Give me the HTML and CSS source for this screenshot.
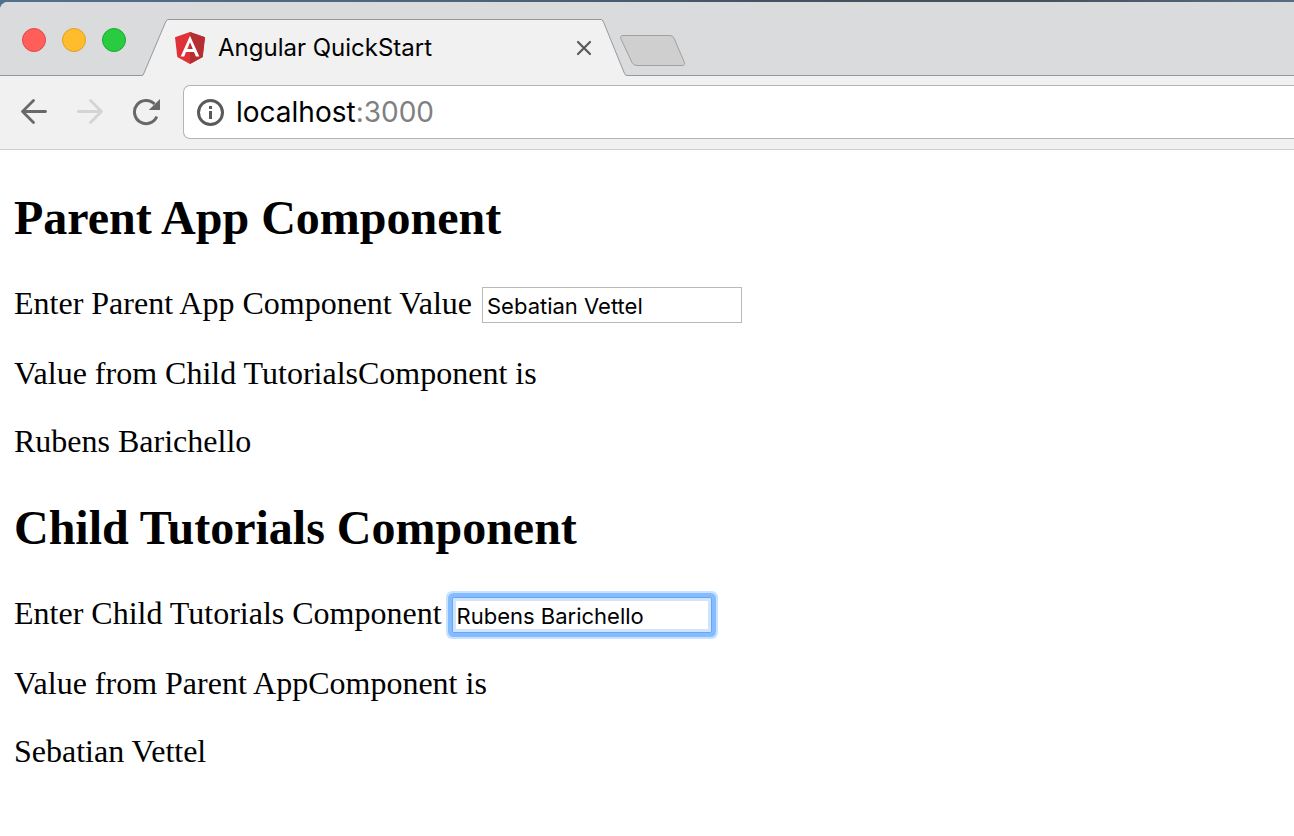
FILE: index.html
```html
<!DOCTYPE html>
<html lang="en">
<head>
<meta charset="utf-8">
<title>Angular QuickStart</title>
<link rel="stylesheet" href="styles.css">
</head>
<body>
<div class="desktop">
<header class="browser">
  <div class="tab-strip">
    <div class="window-controls">
      <button class="light light-close" aria-label="Close window"></button>
      <button class="light light-minimize" aria-label="Minimize window"></button>
      <button class="light light-zoom" aria-label="Zoom window"></button>
    </div>
    <div class="tab">
      <svg class="tab-edge" width="26" height="57" viewBox="0 0 26 57" aria-hidden="true">
        <path d="M0 57V56.5Q1 56.5 1.6 55L23.6 3Q24.6 .5 26 .5V57Z" fill="#f1f1f1"/>
        <path d="M0 56.5Q1 56.5 1.6 55L23.6 3Q24.6 .5 26 .5" fill="none" stroke="#98989a"/>
      </svg>
      <div class="tab-body">
        <svg class="favicon" width="30" height="32" viewBox="0 0 30 32" aria-hidden="true">
          <path d="M15 0L0 5.3L2.3 25L15 32L27.700 25L30 5.300Z" fill="#de3238"/>
          <path d="M15 0V32L27.700 25L30 5.300Z" fill="#b52e31"/>
          <path d="M15 3.800L5.700 24.500H9.200L11 20H19L20.900 24.500H24.300ZM15 10.300L17.800 17H12.300Z" fill="#fff" fill-rule="evenodd"/>
        </svg>
        <span class="tab-title">Angular QuickStart</span>
        <button class="tab-close" aria-label="Close tab">
          <svg width="16" height="16" viewBox="0 0 16 16" aria-hidden="true"><path d="M2 2L14 14M14 2L2 14" stroke="#5a5a5a" stroke-width="2.200" stroke-linecap="round"/></svg>
        </button>
      </div>
      <svg class="tab-edge" width="26" height="57" viewBox="0 0 26 57" aria-hidden="true">
        <path d="M0 57V.5Q1.500 .5 2.500 3L23.500 54.500Q24.300 56.500 26 56.500V57Z" fill="#f1f1f1"/>
        <path d="M0 .5Q1.500 .5 2.500 3L23.500 54.500Q24.300 56.500 26 56.500" fill="none" stroke="#98989a"/>
      </svg>
    </div>
    <button class="new-tab" aria-label="New tab">
      <svg width="66" height="33" viewBox="0 0 66 33" aria-hidden="true"><path d="M3 .5H50Q52.800 .5 54 3L64 26.500Q66 30.500 62 30.500H17Q13.500 30.500 12 27.500L1 4Q-.5 .5 3 .5Z" fill="#cfcfcf" stroke="#9f9fa1"/></svg>
    </button>
  </div>
  <div class="toolbar">
    <nav class="nav-buttons">
      <button class="nav-button" aria-label="Back">
        <svg width="28" height="28" viewBox="0 0 28 28" fill="none" stroke="#686868" stroke-width="2.800" stroke-linecap="round" stroke-linejoin="round" aria-hidden="true"><path d="M25.500 13.500H2.500M13.500 2.500L2.500 13.500L13.500 24.500"/></svg>
      </button>
      <button class="nav-button" aria-label="Forward" disabled>
        <svg width="28" height="28" viewBox="0 0 28 28" fill="none" stroke="#d4d4d4" stroke-width="2.800" stroke-linecap="round" stroke-linejoin="round" aria-hidden="true"><path d="M2.500 13.500H25.500M14.500 2.500L25.500 13.500L14.500 24.500"/></svg>
      </button>
      <button class="nav-button" aria-label="Reload">
        <svg width="28" height="28" viewBox="0 0 28 28" aria-hidden="true"><path d="M24.800 18.500A11.600 11.600 0 1 1 22.500 6" fill="none" stroke="#686868" stroke-width="3"/><path d="M28 1V12H16.800Z" fill="#686868"/></svg>
      </button>
    </nav>
    <div class="address-bar">
      <svg class="info-icon" width="28" height="28" viewBox="0 0 28 28" aria-hidden="true"><circle cx="14.500" cy="14.500" r="12" fill="none" stroke="#5a5a5a" stroke-width="3"/><path d="M13 8H16V11H13ZM13 13H16V21H13Z" fill="#5a5a5a"/></svg>
      <span class="address">localhost<span class="port">:3000</span></span>
    </div>
  </div>
</header>
</div>
<main class="page">
  <section class="component">
    <h1 class="heading">Parent App Component</h1>
    <div class="field">
      <label for="parent-value">Enter Parent App Component Value</label>
      <input class="text-box" id="parent-value" type="text" value="Sebatian Vettel">
    </div>
    <p class="line">Value from Child TutorialsComponent is</p>
    <p class="line">Rubens Barichello</p>
  </section>
  <section class="component">
    <h1 class="heading">Child Tutorials Component</h1>
    <div class="field">
      <label for="child-value">Enter Child Tutorials Component</label>
      <input class="text-box text-box-active" id="child-value" type="text" value="Rubens Barichello">
    </div>
    <p class="line">Value from Parent AppComponent is</p>
    <p class="line">Sebatian Vettel</p>
  </section>
</main>
</body>
</html>
```
FILE: styles.css
```css
* {
  box-sizing: border-box;
}

body {
  margin: 0;
  background: #fff;
  color: #000;
  font-family: "Liberation Serif", "Times New Roman", serif;
}

button {
  padding: 0;
  border: 0;
  background: none;
}

svg {
  display: block;
  flex: none;
}

.desktop {
  padding-top: 2px;
  background: linear-gradient(to right, #53708d, #4c6277 40%, #445261 60%, #44515e 80%, #586c80);
}

.browser {
  overflow: hidden;
  border-top-left-radius: 8px;
  background: #f1f1f1;
  font-family: Inter, sans-serif;
}

.tab-strip {
  display: flex;
  align-items: flex-end;
  padding-left: 22px;
  height: 74px;
  background: linear-gradient(#98989a, #98989a) bottom / 100% 1px no-repeat, #d9dbdc;
}

.window-controls {
  display: flex;
  gap: 16px;
  width: 120px;
  padding-bottom: 24px;
}

.light {
  width: 24px;
  height: 24px;
  border: 1px solid;
  border-radius: 50%;
}

.light-close {
  border-color: #e0474a;
  background: #ff5f58;
}

.light-minimize {
  border-color: #dfa023;
  background: #ffbd2e;
}

.light-zoom {
  border-color: #1aab2c;
  background: #29cc41;
}

.tab {
  display: flex;
}

.tab-body {
  display: flex;
  align-items: center;
  width: 433px;
  padding: 0 9px 0 7px;
  border-top: 1px solid #98989a;
  background: #f1f1f1;
}

.tab-title {
  flex: 1;
  margin-left: 13px;
  font-size: 24px;
  line-height: 32px;
}

.new-tab {
  align-self: flex-start;
  margin: 33px 0 0 -7px;
}

.toolbar {
  display: flex;
  align-items: center;
  height: 74px;
  padding: 0 0 2px 20px;
  border-bottom: 1px solid #d0d0d0;
}

.nav-buttons {
  display: flex;
  gap: 28px;
  margin-right: 23px;
}

.address-bar {
  display: flex;
  flex: 1;
  align-items: center;
  gap: 12px;
  height: 54px;
  padding-left: 12px;
  border: 1px solid #b4b4b4;
  border-right: 0;
  border-radius: 7px 0 0 7px;
  background: #fff;
}

.address {
  font-size: 28px;
  line-height: 36px;
}

.port {
  color: #808080;
}

.page {
  display: flex;
  flex-direction: column;
  gap: 42px;
  padding: 41px 14px;
  font-size: 32px;
  line-height: 36px;
}

.heading {
  margin: 0 0 40px;
  font-size: 48px;
  line-height: 54px;
}

.field {
  display: flex;
  gap: 10px;
  height: 38px;
}

.line {
  margin: 32px 0 0;
}

.text-box {
  align-self: flex-end;
  width: 260px;
  height: 36px;
  padding: 2px 4px 0;
  border: 1px solid #b9b9b9;
  border-radius: 0;
  outline: 0;
  background: #fff;
  color: #000;
  font-family: Inter, sans-serif;
  font-size: 22px;
}

.text-box-active {
  border-color: #6ba7ee;
  border-radius: 2px;
  box-shadow: inset 0 0 0 3px #cfe5ff, 0 0 0 4px #85bcff, 0 0 0 6px #c9e2ff;
}
```
